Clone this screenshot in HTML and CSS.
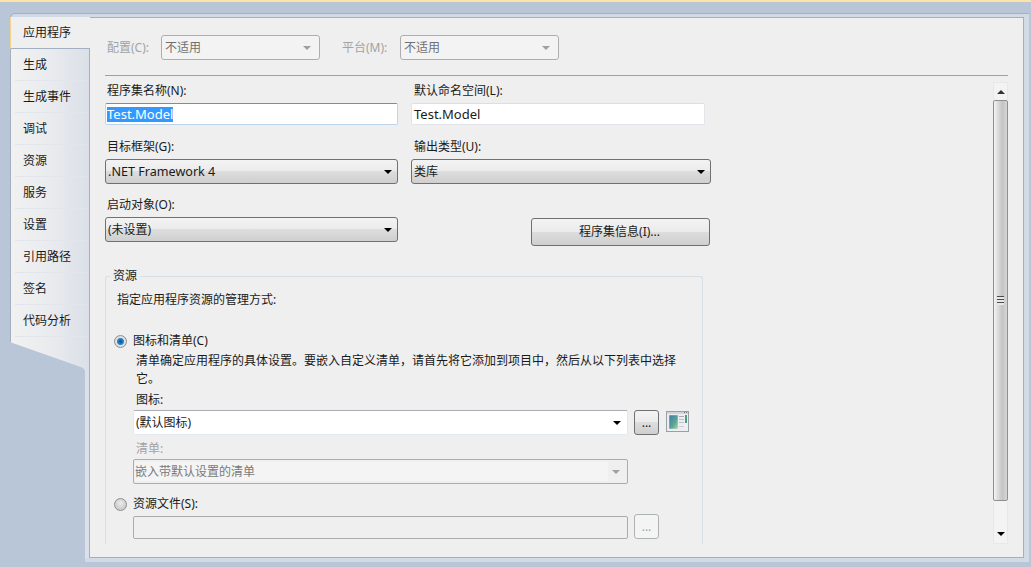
FILE: index.html
```html
<!DOCTYPE html>
<html lang="zh-CN">
<head>
<meta charset="utf-8">
<title>应用程序</title>
<link rel="stylesheet" href="styles.css">
</head>
<body>
<div class="topline"></div>
<div class="window">
  <nav class="tabs">
    <div class="tab active">应用程序</div>
    <div class="tab">生成</div>
    <div class="tab">生成事件</div>
    <div class="tab">调试</div>
    <div class="tab">资源</div>
    <div class="tab">服务</div>
    <div class="tab">设置</div>
    <div class="tab">引用路径</div>
    <div class="tab">签名</div>
    <div class="tab">代码分析</div>
  </nav>
  <main class="panel">
    <div class="config-row">
      <span class="lbl dis w-config">配置(C):</span>
      <div class="sel-dis w-159"><span>不适用</span><i class="arrow gray"></i></div>
      <span class="lbl dis w-platform">平台(M):</span>
      <div class="sel-dis w-159"><span>不适用</span><i class="arrow gray"></i></div>
    </div>
    <div class="divider"></div>
    <div class="scroll-row">
      <div class="form">
        <div class="fields">
          <div class="field">
            <label class="lbl">程序集名称(N):</label>
            <div class="input focus"><span class="selected">Test.Model</span></div>
          </div>
          <div class="field">
            <label class="lbl right">默认命名空间(L):</label>
            <div class="input w-294">Test.Model</div>
          </div>
          <div class="field">
            <label class="lbl">目标框架(G):</label>
            <div class="select"><span class="latin">.NET Framework 4</span><i class="arrow"></i></div>
          </div>
          <div class="field">
            <label class="lbl right">输出类型(U):</label>
            <div class="select w-300"><span>类库</span><i class="arrow"></i></div>
          </div>
          <div class="field">
            <label class="lbl">启动对象(O):</label>
            <div class="select"><span>(未设置)</span><i class="arrow"></i></div>
          </div>
          <div class="field">
            <div class="btn-info">程序集信息(I)...</div>
          </div>
        </div>
        <section class="group">
          <div class="legend">资源</div>
          <p class="intro">指定应用程序资源的管理方式:</p>
          <div class="radio-row">
            <i class="radio on"></i><span>图标和清单(C)</span>
          </div>
          <p class="desc">清单确定应用程序的具体设置。要嵌入自定义清单，请首先将它添加到项目中，然后从以下列表中选择它。</p>
          <div class="sub-lbl sub-icon">图标:</div>
          <div class="ctl-row">
            <div class="combo"><span>(默认图标)</span><i class="arrow"></i></div>
            <div class="dots">...</div>
            <svg class="app-icon" width="24" height="23" viewBox="0 0 24 23" aria-hidden="true">
              <defs>
                <linearGradient id="pic" x1="0" y1="0" x2="1" y2="1">
                  <stop offset="0" stop-color="#3d7ba8"/>
                  <stop offset="0.6" stop-color="#5ca596"/>
                  <stop offset="1" stop-color="#b4d69a"/>
                </linearGradient>
              </defs>
              <rect x="0.5" y="1.5" width="22" height="20" fill="#eceef2" stroke="#9a9ea6"/>
              <rect x="1" y="2" width="21" height="2" fill="#d2d6dc"/>
              <rect x="18" y="2" width="1" height="1" fill="#777"/>
              <rect x="20" y="2" width="1" height="1" fill="#777"/>
              <rect x="3" y="5" width="9" height="14" fill="url(#pic)" stroke="#e2e5ea" stroke-width="0.5"/>
              <rect x="13" y="6" width="5" height="1" fill="#a6abb2"/>
              <rect x="13" y="9" width="5" height="1" fill="#bcc0c6"/>
              <rect x="13" y="12" width="5" height="1" fill="#bcc0c6"/>
              <rect x="13" y="16" width="5" height="1" fill="#cacdd2"/>
              <rect x="19" y="5" width="2" height="8" fill="#4f9c88"/>
            </svg>
          </div>
          <div class="sub-lbl dis sub-manifest">清单:</div>
          <div class="combo disabled"><span class="combo-fill">嵌入带默认设置的清单</span><i class="arrow gray"></i></div>
          <div class="radio-row second">
            <i class="radio"></i><span>资源文件(S):</span>
          </div>
          <div class="ctl-row bottom">
            <div class="field-dis"></div>
            <div class="dots off">...</div>
          </div>
        </section>
      </div>
      <div class="scrollbar">
        <div class="sb-btn up"><i class="arrow up"></i></div>
        <div class="sb-thumb"><div class="grip"></div></div>
        <div class="sb-btn down"><i class="arrow"></i></div>
      </div>
    </div>
  </main>
</div>
</body>
</html>
```
FILE: styles.css
```css
* { box-sizing: border-box; }
html, body { margin: 0; height: 100%; overflow: hidden; }
body {
  background: #b9c6d8;
  font: 12px/18px "Noto Sans", "Noto Sans CJK SC", sans-serif;
  color: #1a1a1a;
}
.topline { height: 2px; background: #fce3a6; }
.window {
  display: flex;
  margin: 11px 2px 0 10px;
  height: 549px;
  padding: 3px 5px 4px 0;
  background: #d2dae5;
  border-top: 1px solid #a3b0c2;
  border-left: 1px solid #a3b0c2;
  border-top-left-radius: 5px;
  clip-path: path("M0 0H1019V549H75V359Q75 355 71 354L0 329Z");
}
.tabs {
  width: 79px;
  flex: none;
  background: linear-gradient(90deg, #f1f1f1, #e9ebee 50%, #dbe0e8);
  border-right: 1px solid #a3b0c2;
}
.tab {
  height: 32px;
  padding: 7px 0 0 8px;
  margin: 0 4px;
  border-bottom: 1px solid #e2e6ec;
}
.tab.active {
  position: relative;
  margin: 0 -1px 0 -1px;
  padding-left: 12px;
  background: #efefef;
  border-left: 1px solid #f4d48a;
  border-bottom: 1px solid #a3b0c2;
}
.panel {
  flex: 1;
  display: flex;
  flex-direction: column;
  min-width: 0;
  background: #efefef;
  border: 1px solid #a3b0c2;
  border-left: 0;
  padding: 17px 15px 13px 15px;
}
.config-row { display: flex; align-items: center; height: 25px; flex: none; }
.lbl { display: block; height: 18px; padding-left: 2px; }
.dis { color: #a3a3a3; }
.w-config { width: 56px; }
.w-platform { width: 80px; padding-left: 22px; }
.w-159 { width: 159px; }
.sel-dis {
  display: flex;
  align-items: center;
  justify-content: space-between;
  height: 25px;
  padding: 0 8px 0 3px;
  background: #f3f3f3;
  border: 1px solid #adadad;
  border-radius: 3px;
  color: #707070;
}
.divider { height: 1px; flex: none; margin-top: 15px; background: #a0a0a0; }
.scroll-row { display: flex; flex: 1; min-height: 0; }
.form { flex: 1; min-width: 0; overflow: hidden; padding-top: 5px; }
.fields {
  display: grid;
  grid-template-columns: 293px 300px;
  column-gap: 13px;
  row-gap: 11px;
}
.field { display: flex; flex-direction: column; align-items: flex-start; }
.field .lbl { margin-bottom: 4px; line-height: 20px; }
.field .lbl.right { padding-left: 3px; }
.input {
  width: 293px;
  height: 22px;
  margin-bottom: 1px;
  padding: 1px 0 0 1px;
  background: #fff;
  border: 1px solid #e3e5ea;
  border-top-color: #dcdfe6;
  border-radius: 2px;
  font-size: 13px;
}
.input.w-294 { width: 294px; padding-left: 2px; }
.input.focus { border-color: #bcd5ea; border-top-color: #5d97c5; }
.selected {
  display: inline-block;
  height: 15px;
  line-height: 15px;
  background: #3399ff;
  color: #fff;
  vertical-align: top;
  margin-top: 2px;
}
.select {
  display: flex;
  align-items: center;
  justify-content: space-between;
  width: 293px;
  height: 25px;
  padding: 0 5px 0 2px;
  border: 1px solid #707070;
  border-radius: 3px;
  background: linear-gradient(#f3f3f3, #ebebeb 49%, #dddddd 50%, #cfcfcf);
}
.select.w-300 { width: 300px; }
.latin { font-size: 12.6px; line-height: 16px; }
.arrow {
  display: block;
  flex: none;
  width: 0;
  height: 0;
  border-left: 4px solid transparent;
  border-right: 4px solid transparent;
  border-top: 4px solid #000;
}
.arrow.gray { border-top-color: #a0a0a0; }
.arrow.up { border-top: 0; border-bottom: 4px solid #333; }
.btn-info {
  width: 179px;
  height: 28px;
  margin: 23px 0 0 120px;
  padding-right: 2px;
  text-align: center;
  line-height: 26px;
  border: 1px solid #707070;
  border-radius: 3px;
  background: linear-gradient(#f3f3f3, #ebebeb 49%, #dddddd 50%, #cfcfcf);
}
.group {
  width: 598px;
  height: 280px;
  margin-top: 30px;
  padding: 0 0 0 11px;
  border: 1px solid #d5dfe5;
  border-bottom: 0;
  border-radius: 3px 3px 0 0;
}
.legend {
  width: fit-content;
  margin: -10px 0 0 -7px;
  padding: 0 3px 0 3px;
  background: #efefef;
}
.intro { margin: 6px 0 0; }
.radio-row { display: flex; align-items: center; gap: 6px; margin: 23px 0 0 -3px; }
.radio-row.second { margin-top: 11px; }
.radio {
  display: block;
  width: 13px;
  height: 13px;
  border-radius: 50%;
  border: 1px solid #8e8f8f;
  background: radial-gradient(circle at 50% 40%, #ececec, #bdbdbd);
}
.radio.on { background: radial-gradient(circle, #0d4f88 0, #2f8ad0 40%, #e6e6e6 52%, #c4c4c4 100%); }
.desc { width: 545px; margin: 2px 0 0 19px; }
.sub-lbl { margin-left: 19px; }
.sub-icon { margin-top: 3px; }
.sub-manifest { margin-top: 5px; }
.ctl-row { display: flex; gap: 6px; margin: 1px 0 0 16px; }
.ctl-row.bottom { align-items: flex-end; margin-top: 1px; }
.combo {
  display: flex;
  align-items: center;
  justify-content: space-between;
  width: 495px;
  height: 25px;
  padding: 0 6px 0 2px;
  background: #fff;
  border: 1px solid #e3e9ef;
  border-top-color: #abadb3;
  border-radius: 2px;
}
.combo.disabled {
  margin: 1px 0 0 16px;
  padding: 2px 7px 2px 1px;
  background: #efefef;
  border: 1px solid #acacac;
  color: #7a7a7a;
}
.combo-fill { display: block; width: 473px; height: 19px; background: #f4f4f4; line-height: 19px; }
.dots {
  width: 25px;
  height: 25px;
  text-align: center;
  line-height: 24px;
  border: 1px solid #707070;
  border-radius: 3px;
  background: linear-gradient(#f3f3f3, #ebebeb 49%, #dddddd 50%, #cfcfcf);
}
.dots.off { background: #f4f4f4; border-color: #adb2b5; color: #a0a0a0; }
.app-icon { margin-left: 1px; }
.field-dis { width: 495px; height: 23px; background: #efefef; border: 1px solid #acacac; border-radius: 2px; }
.scrollbar { display: flex; flex-direction: column; width: 15px; flex: none; margin-top: 6px; }
.sb-btn {
  display: flex;
  justify-content: center;
  background: #f3f3f3;
  border: 1px solid #e8e8e8;
}
.sb-btn.up { height: 18px; align-items: center; border-bottom: 0; }
.sb-btn.down { flex: 1; align-items: flex-end; padding-bottom: 7px; border-top: 0; }
.sb-thumb {
  display: flex;
  align-items: center;
  justify-content: center;
  height: 401px;
  border: 1px solid #8e8f8f;
  border-radius: 2px;
  background: linear-gradient(90deg, #f4f4f4, #dcdcdc 30%, #c4c4c4 65%, #d6d6d6);
}
.grip {
  width: 7px;
  height: 9px;
  background: repeating-linear-gradient(#4a4a4a 0, #4a4a4a 1px, #e8e8e8 1px, #e8e8e8 3px);
}
```
